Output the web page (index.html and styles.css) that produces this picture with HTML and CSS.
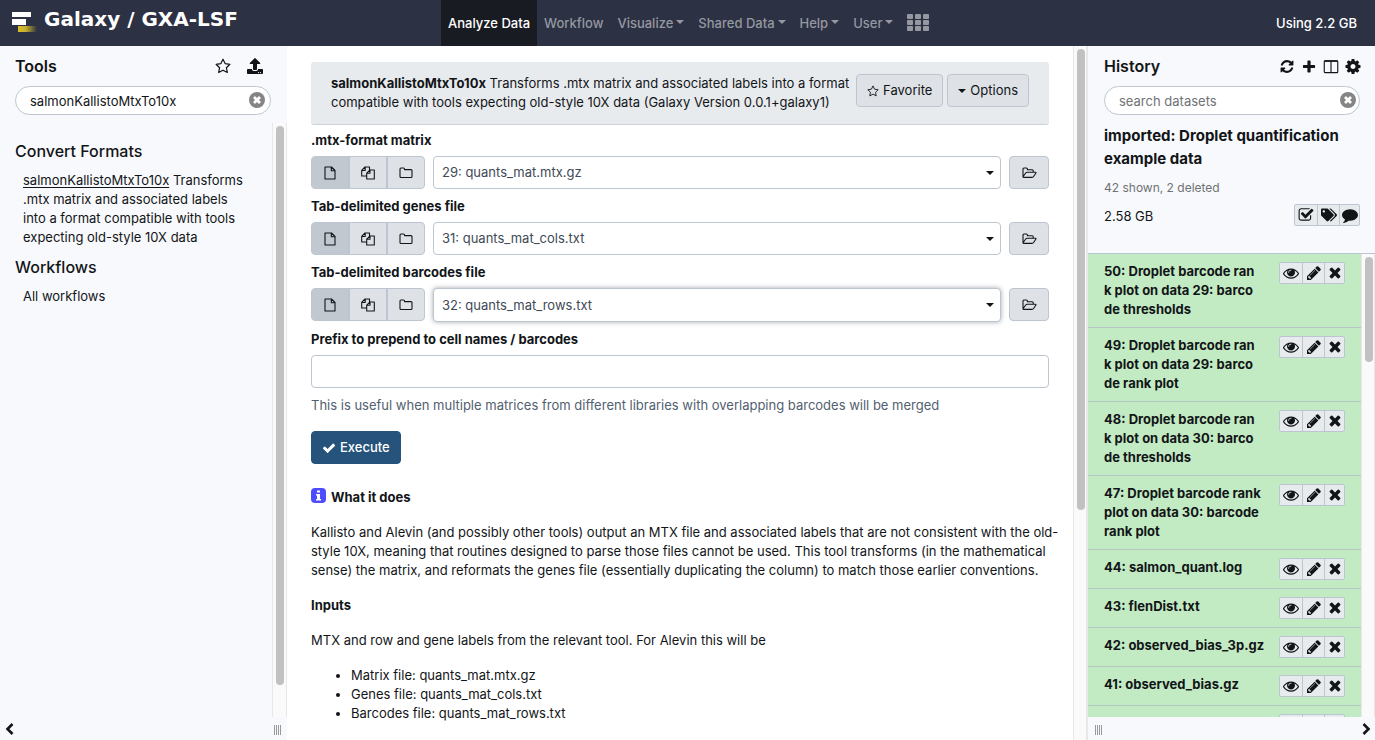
FILE: index.html
```html
<!DOCTYPE html>
<html lang="en">
<head>
<meta charset="utf-8">
<title>Galaxy / GXA-LSF</title>
<link rel="stylesheet" href="styles.css">
</head>
<body>
<svg class="sprite" aria-hidden="true">
  <symbol id="i-star" viewBox="0 0 16 16"><path fill="none" stroke="currentColor" stroke-width="1.200" stroke-linejoin="round" d="M8 1.200l2.100 4.400 4.800.7-3.500 3.400.9 4.800L8 12.200l-4.300 2.300.9-4.800L1.100 6.300l4.800-.7z"/></symbol>
  <symbol id="i-upload" viewBox="0 0 512 512"><path d="M296 384h-80c-13.300 0-24-10.700-24-24V192h-87.700c-17.800 0-26.700-21.500-14.100-34.100L242.300 5.700c7.500-7.500 19.800-7.500 27.300 0l152.200 152.200c12.600 12.600 3.700 34.100-14.100 34.100H320v168c0 13.300-10.700 24-24 24zm216-8v112c0 13.300-10.700 24-24 24H24c-13.300 0-24-10.700-24-24V376c0-13.300 10.700-24 24-24h136v8c0 30.900 25.100 56 56 56h80c30.900 0 56-25.100 56-56v-8h136c13.300 0 24 10.700 24 24zm-124 88c0-11-9-20-20-20s-20 9-20 20 9 20 20 20 20-9 20-20zm64 0c0-11-9-20-20-20s-20 9-20 20 9 20 20 20 20-9 20-20z"/></symbol>
  <symbol id="i-clear" viewBox="0 0 16 16"><circle cx="8" cy="8" r="8"/><path d="M5 5l6 6M11 5l-6 6" stroke="#fff" stroke-width="2.800"/></symbol>
  <symbol id="i-refresh" viewBox="0 0 1536 1792"><path d="M1511 1056q0 5-1 7-64 268-268 434.500t-478 166.500q-146 0-282.500-55t-243.500-157l-129 129q-19 19-45 19t-45-19-19-45v-448q0-26 19-45t45-19h448q26 0 45 19t19 45-19 45l-137 137q71 66 161 102t187 36q134 0 250-65t186-179q11-17 53-117 8-23 30-23h192q13 0 22.500 9.500t9.500 22.500zm25-800v448q0 26-19 45t-45 19h-448q-26 0-45-19t-19-45 19-45l138-138q-148-137-349-137-134 0-250 65t-186 179q-11 17-53 117-8 23-30 23h-199q-13 0-22.500-9.500t-9.500-22.500v-7q65-268 270-434.500t480-166.500q146 0 284 55.500t245 156.500l130-129q19-19 45-19t45 19 19 45z"/></symbol>
  <symbol id="i-plus" viewBox="0 0 16 16"><path d="M6.300 2.300q0-.8.8-.8h1.800q.8 0 .8.800v4h4q.8 0 .8.800v1.800q0 .8-.8.800h-4v4q0 .8-.8.800H7.100q-.8 0-.8-.8v-4h-4q-.8 0-.8-.8V7.100q0-.8.800-.8h4z"/></symbol>
  <symbol id="i-columns" viewBox="0 0 16 16"><path fill="none" stroke="currentColor" stroke-width="1.200" d="M1.800 2h12.400q1 0 1 1v10.500q0 1-1 1H1.800q-1 0-1-1V3q0-1 1-1zM8 2v12.500"/><path d="M.8 1.400h14.400v1.600H.8z"/></symbol>
  <symbol id="i-cog" viewBox="128 128 1536 1536"><path d="M1152 896q0-106-75-181t-181-75-181 75-75 181 75 181 181 75 181-75 75-181zm512-109v222q0 12-8 23t-20 13l-185 28q-19 54-39 91 35 50 107 138 10 12 10 25t-9 23q-27 37-99 108t-94 71q-12 0-26-9l-138-108q-44 23-91 38-16 136-29 186-7 28-36 28h-222q-14 0-24.500-8.500t-11.500-21.500l-28-184q-49-16-90-37l-141 107q-10 9-25 9-14 0-25-11-126-114-165-168-7-10-7-23 0-12 8-23 15-21 51-66.500t54-70.500q-27-50-41-99l-183-27q-13-2-21-12.500t-8-23.500v-222q0-12 8-23t19-13l186-28q14-46 39-92-40-57-107-138-10-12-10-24 0-10 9-23 26-36 98.500-107.500t94.500-71.500q13 0 26 10l138 107q44-23 91-38 16-136 29-186 7-28 36-28h222q14 0 24.500 8.500t11.500 21.500l28 184q49 16 90 37l142-107q9-9 24-9 13 0 25 10 129 119 165 170 7 8 7 22 0 12-8 23-15 21-51 66.500t-54 70.500q26 50 41 98l183 28q13 2 21 12.500t8 23.500z"/></symbol>
  <symbol id="i-check-square" viewBox="0 0 1792 1792"><path d="M1472 930v318q0 119-84.500 203.500t-203.500 84.500h-832q-119 0-203.500-84.500t-84.500-203.500v-832q0-119 84.500-203.500t203.500-84.500h832q63 0 117 25 15 7 18 23 3 17-9 29l-49 49q-10 10-23 10-3 0-9-2-23-6-45-6h-832q-66 0-113 47t-47 113v832q0 66 47 113t113 47h832q66 0 113-47t47-113v-254q0-13 9-22l64-64q10-10 23-10 6 0 12 3 20 8 20 29zm231-489l-814 814q-24 24-57 24t-57-24l-430-430q-24-24-24-57t24-57l110-110q24-24 57-24t57 24l263 263 647-647q24-24 57-24t57 24l110 110q24 24 24 57t-24 57z"/></symbol>
  <symbol id="i-tags" viewBox="0 0 640 512"><path d="M497.900 225.900L286.100 14.100A48 48 0 0 0 252.100 0H48C21.500 0 0 21.500 0 48v204.100a48 48 0 0 0 14.100 33.900l211.900 211.900c18.700 18.700 49.100 18.700 67.900 0l204.100-204.100c18.700-18.700 18.700-49.100 0-67.900zM112 160c-26.500 0-48-21.500-48-48s21.500-48 48-48 48 21.500 48 48-21.500 48-48 48zm513.900 133.800L421.800 497.900c-18.700 18.700-49.100 18.700-67.900 0l-.4-.4L527.600 323.500c17-17 26.400-39.600 26.400-63.600s-9.400-46.600-26.400-63.600L331.400 0h48.700a48 48 0 0 1 33.900 14.100l211.900 211.900c18.700 18.700 18.700 49.100 0 67.800z"/></symbol>
  <symbol id="i-comment" viewBox="0 0 1792 1792"><path d="M1792 896q0 174-120 321.500t-326 233-450 85.500q-70 0-145-8-198 175-460 242-49 14-114 22-17 2-30.500-9t-17.500-29v-1q-3-4-.5-12t2-10 4.500-9.500l6-9 7-8.500 8-9q7-8 31-34.500t34.500-38 31-39.500 32.500-51 27-59 26-76q-157-89-247.500-220t-90.500-281q0-130 71-248.500t191-204.500 286-136.500 348-50.500q244 0 450 85.500t326 233 120 321.500z"/></symbol>
  <symbol id="i-eye" viewBox="0 0 1792 1792"><path d="M1664 960q-152-236-381-353 61 104 61 225 0 185-131.500 316.500t-316.500 131.500-316.500-131.500-131.500-316.500q0-121 61-225-229 117-381 353 133 205 333.500 326.500t434.500 121.500 434.500-121.500 333.500-326.500zm-720-384q0-20-14-34t-34-14q-125 0-214.500 89.500t-89.500 214.500q0 20 14 34t34 14 34-14 14-34q0-86 61-147t147-61q20 0 34-14t14-34zm848 384q0 34-20 69-140 230-376.500 368.500t-499.500 138.500-499.500-139-376.500-368q-20-35-20-69t20-69q140-229 376.500-368t499.500-139 499.500 139 376.500 368q20 35 20 69z"/></symbol>
  <symbol id="i-pencil" viewBox="128 128 1536 1536"><path d="M491 1536l91-91-235-235-91 91v107h128v128h107zm523-928q0-22-22-22-10 0-17 7l-542 542q-7 7-7 17 0 22 22 22 10 0 17-7l542-542q7-7 7-17zm-54-192l416 416-832 832h-416v-416zm683 96q0 53-37 90l-166 166-416-416 166-165q36-38 90-38 53 0 91 38l235 234q37 39 37 91z"/></symbol>
  <symbol id="i-times" viewBox="128 192 1536 1536"><path d="M1490 1322q0 40-28 68l-136 136q-28 28-68 28t-68-28l-294-294-294 294q-28 28-68 28t-68-28l-136-136q-28-28-28-68t28-68l294-294-294-294q-28-28-28-68t28-68l136-136q28-28 68-28t68 28l294 294 294-294q28-28 68-28t68 28l136 136q28 28 28 68t-28 68l-294 294 294 294q28 28 28 68z"/></symbol>
  <symbol id="i-check" viewBox="0 0 1792 1792"><path d="M1671 566q0 40-28 68l-724 724-136 136q-28 28-68 28t-68-28l-136-136-362-362q-28-28-28-68t28-68l136-136q28-28 68-28t68 28l294 295 656-657q28-28 68-28t68 28l136 136q28 28 28 68z"/></symbol>
  <symbol id="i-file" viewBox="0 0 14 14"><path fill="none" stroke="currentColor" stroke-width="1.100" stroke-linejoin="round" d="M2 1h6.500L12 4.500V13H2zM8.300 1v3.700H12"/></symbol>
  <symbol id="i-files" viewBox="0 0 14 14"><path fill="none" stroke="currentColor" stroke-width="1.100" stroke-linejoin="round" d="M5.500 10H.7V4.400L4 1h4.500v3M4.200 1v3.500H.8M9 4h4.300v9H5.700V7.200zM9 4v3.300H5.700"/></symbol>
  <symbol id="i-folder" viewBox="0 0 14 14"><path fill="none" stroke="currentColor" stroke-width="1.100" stroke-linejoin="round" d="M1 3q0-1 1-1h2.500q1 0 1 1v.6H12q1 0 1 1V10.500q0 1-1 1H2q-1 0-1-1z"/></symbol>
  <symbol id="i-folder-open" viewBox="0 0 15 14"><path fill="none" stroke="currentColor" stroke-width="1.100" stroke-linejoin="round" d="M1 10.500V3q0-1 1-1h2.400q1 0 1 1v.7h4.800q1 0 1 1V6.300M1 10.700l2.700-3.700q.5-.7 1.400-.7h8.200q1.200 0 .5 1l-2.200 3.200q-.6.900-1.500.9H1.900q-.9 0-.9-1z"/></symbol>
  <symbol id="i-left" viewBox="0 0 12 14"><path fill="none" stroke="currentColor" stroke-width="2.600" d="M8.500 2L3.500 7l5 5"/></symbol>
  <symbol id="i-right" viewBox="0 0 12 14"><path fill="none" stroke="currentColor" stroke-width="2.600" d="M3.500 2l5 5-5 5"/></symbol>
  <symbol id="i-grip" viewBox="0 0 8 10"><path stroke="#999" stroke-width="1" d="M.5 0v10M2.500 0v10M4.500 0v10M6.500 0v10"/></symbol>
</svg>

<header class="masthead">
  <a class="brand" href="#">
    <svg class="brand-logo" viewBox="0 0 26 22" aria-hidden="true">
      <defs><linearGradient id="gold"><stop offset="0" stop-color="#d9bf26"/><stop offset=".4" stop-color="#c7b02d"/><stop offset="1" stop-color="#2c3143"/></linearGradient></defs>
      <path fill="#fff" d="M0 0h19v5H0zM0 7h14v6H0z"/><path fill="url(#gold)" d="M6 14h19v6H6z"/>
    </svg>
    <span>Galaxy / GXA-LSF</span>
  </a>
  <nav class="nav">
    <a class="active" href="#">Analyze Data</a>
    <a href="#">Workflow</a>
    <a href="#">Visualize<i class="caret"></i></a>
    <a href="#">Shared Data<i class="caret"></i></a>
    <a href="#">Help<i class="caret"></i></a>
    <a href="#">User<i class="caret"></i></a>
    <a href="#" aria-label="Apps"><svg class="apps" viewBox="0 0 22 18"><g fill="currentColor"><rect width="6" height="5" rx="1"/><rect x="8" width="6" height="5" rx="1"/><rect x="16" width="6" height="5" rx="1"/><rect y="6" width="6" height="5" rx="1"/><rect x="8" y="6" width="6" height="5" rx="1"/><rect x="16" y="6" width="6" height="5" rx="1"/><rect y="12" width="6" height="5" rx="1"/><rect x="8" y="12" width="6" height="5" rx="1"/><rect x="16" y="12" width="6" height="5" rx="1"/></g></svg></a>
  </nav>
  <span class="quota">Using 2.2 GB</span>
</header>

<div class="columns">
  <aside class="panel tools">
    <div class="panel-head">
      <h2>Tools</h2>
      <div class="head-icons wide">
        <button aria-label="Favorites"><svg><use href="#i-star"/></svg></button>
        <button aria-label="Upload"><svg><use href="#i-upload"/></svg></button>
      </div>
    </div>
    <div class="search">
      <input type="text" aria-label="search tools" value="salmonKallistoMtxTo10x">
      <button aria-label="Clear"><svg><use href="#i-clear"/></svg></button>
    </div>
    <div class="scroll-area">
      <div class="tool-list">
        <h3>Convert Formats</h3>
        <p><a href="#">salmonKallistoMtxTo10x</a> Transforms .mtx matrix and associated labels into a format compatible with tools expecting old-style 10X data</p>
        <h3>Workflows</h3>
        <p>All workflows</p>
      </div>
      <div class="track"><div class="thumb tools-thumb"></div></div>
    </div>
    <footer class="panel-foot">
      <button aria-label="Collapse tools"><svg class="chevron"><use href="#i-left"/></svg></button>
      <svg class="grip"><use href="#i-grip"/></svg>
    </footer>
  </aside>

  <main class="center">
    <div class="center-body">
      <div class="tool-header">
        <p><b>salmonKallistoMtxTo10x</b> Transforms .mtx matrix and associated labels into a format compatible with tools expecting old-style 10X data (Galaxy Version 0.0.1+galaxy1)</p>
        <div class="tool-actions">
          <button class="btn"><svg><use href="#i-star"/></svg>Favorite</button>
          <button class="btn"><i class="caret"></i>Options</button>
        </div>
      </div>
      <form class="form">
        <div class="field">
          <label for="matrix">.mtx-format matrix</label>
          <div class="row">
            <div class="group">
              <button type="button" class="on" aria-label="Single dataset"><svg><use href="#i-file"/></svg></button>
              <button type="button" aria-label="Multiple datasets"><svg><use href="#i-files"/></svg></button>
              <button type="button" aria-label="Dataset collection"><svg><use href="#i-folder"/></svg></button>
            </div>
            <div class="select"><select id="matrix"><option>29: quants_mat.mtx.gz</option></select><i class="caret"></i></div>
            <button type="button" class="btn browse" aria-label="Browse"><svg><use href="#i-folder-open"/></svg></button>
          </div>
        </div>
        <div class="field">
          <label for="genes">Tab-delimited genes file</label>
          <div class="row">
            <div class="group">
              <button type="button" class="on" aria-label="Single dataset"><svg><use href="#i-file"/></svg></button>
              <button type="button" aria-label="Multiple datasets"><svg><use href="#i-files"/></svg></button>
              <button type="button" aria-label="Dataset collection"><svg><use href="#i-folder"/></svg></button>
            </div>
            <div class="select"><select id="genes"><option>31: quants_mat_cols.txt</option></select><i class="caret"></i></div>
            <button type="button" class="btn browse" aria-label="Browse"><svg><use href="#i-folder-open"/></svg></button>
          </div>
        </div>
        <div class="field">
          <label for="barcodes">Tab-delimited barcodes file</label>
          <div class="row">
            <div class="group">
              <button type="button" class="on" aria-label="Single dataset"><svg><use href="#i-file"/></svg></button>
              <button type="button" aria-label="Multiple datasets"><svg><use href="#i-files"/></svg></button>
              <button type="button" aria-label="Dataset collection"><svg><use href="#i-folder"/></svg></button>
            </div>
            <div class="select focused"><select id="barcodes"><option>32: quants_mat_rows.txt</option></select><i class="caret"></i></div>
            <button type="button" class="btn browse" aria-label="Browse"><svg><use href="#i-folder-open"/></svg></button>
          </div>
        </div>
        <div class="field">
          <label for="prefix">Prefix to prepend to cell names / barcodes</label>
          <input class="text" id="prefix" type="text">
          <p class="help">This is useful when multiple matrices from different libraries with overlapping barcodes will be merged</p>
        </div>
        <button type="button" class="btn primary"><svg><use href="#i-check"/></svg>Execute</button>
      </form>
      <section class="docs">
        <p><b class="what"><span class="info" aria-hidden="true"><svg viewBox="0 0 15 15"><rect width="15" height="15" rx="4" fill="#4d4dff"/><path fill="#fff" d="M6 2.500h3v2H6zM5 6h4v5h1v1.500H5V11h1V7.500H5z"/></svg></span>What it does</b></p>
        <p class="lines">Kallisto and Alevin (and possibly other tools) output an MTX file and associated labels that are not consistent with the old-<br>style 10X, meaning that routines designed to parse those files cannot be used. This tool transforms (in the mathematical<br>sense) the matrix, and reformats the genes file (essentially duplicating the column) to match those earlier conventions.</p>
        <p><b>Inputs</b></p>
        <p>MTX and row and gene labels from the relevant tool. For Alevin this will be</p>
        <ul>
          <li>Matrix file: quants_mat.mtx.gz</li>
          <li>Genes file: quants_mat_cols.txt</li>
          <li>Barcodes file: quants_mat_rows.txt</li>
        </ul>
      </section>
    </div>
    <div class="track"><div class="thumb center-thumb"></div></div>
  </main>

  <aside class="panel history">
    <div class="panel-head">
      <h2>History</h2>
      <div class="head-icons">
        <button aria-label="Refresh"><svg><use href="#i-refresh"/></svg></button>
        <button aria-label="New history"><svg><use href="#i-plus"/></svg></button>
        <button aria-label="View all histories"><svg><use href="#i-columns"/></svg></button>
        <button aria-label="Options"><svg><use href="#i-cog"/></svg></button>
      </div>
    </div>
    <div class="search">
      <input type="text" aria-label="search datasets" placeholder="search datasets">
      <button aria-label="Clear"><svg><use href="#i-clear"/></svg></button>
    </div>
    <div class="summary">
      <h3>imported: Droplet quantification example data</h3>
      <p class="counts">42 shown, 2 deleted</p>
      <div class="size">
        <span>2.58 GB</span>
        <div class="actions large">
          <button aria-label="Select"><svg><use href="#i-check-square"/></svg></button>
          <button aria-label="Tags"><svg><use href="#i-tags"/></svg></button>
          <button aria-label="Annotate"><svg><use href="#i-comment"/></svg></button>
        </div>
      </div>
    </div>
    <div class="scroll-area datasets-area">
      <div class="datasets">
        <div class="dataset"><a href="#">50: Droplet barcode ran<br>k plot on data 29: barco<br>de thresholds</a><div class="actions"><button aria-label="View"><svg><use href="#i-eye"/></svg></button><button aria-label="Edit"><svg><use href="#i-pencil"/></svg></button><button aria-label="Delete"><svg><use href="#i-times"/></svg></button></div></div>
        <div class="dataset"><a href="#">49: Droplet barcode ran<br>k plot on data 29: barco<br>de rank plot</a><div class="actions"><button aria-label="View"><svg><use href="#i-eye"/></svg></button><button aria-label="Edit"><svg><use href="#i-pencil"/></svg></button><button aria-label="Delete"><svg><use href="#i-times"/></svg></button></div></div>
        <div class="dataset"><a href="#">48: Droplet barcode ran<br>k plot on data 30: barco<br>de thresholds</a><div class="actions"><button aria-label="View"><svg><use href="#i-eye"/></svg></button><button aria-label="Edit"><svg><use href="#i-pencil"/></svg></button><button aria-label="Delete"><svg><use href="#i-times"/></svg></button></div></div>
        <div class="dataset"><a href="#">47: Droplet barcode rank<br>plot on data 30: barcode<br>rank plot</a><div class="actions"><button aria-label="View"><svg><use href="#i-eye"/></svg></button><button aria-label="Edit"><svg><use href="#i-pencil"/></svg></button><button aria-label="Delete"><svg><use href="#i-times"/></svg></button></div></div>
        <div class="dataset"><a href="#">44: salmon_quant.log</a><div class="actions"><button aria-label="View"><svg><use href="#i-eye"/></svg></button><button aria-label="Edit"><svg><use href="#i-pencil"/></svg></button><button aria-label="Delete"><svg><use href="#i-times"/></svg></button></div></div>
        <div class="dataset"><a href="#">43: flenDist.txt</a><div class="actions"><button aria-label="View"><svg><use href="#i-eye"/></svg></button><button aria-label="Edit"><svg><use href="#i-pencil"/></svg></button><button aria-label="Delete"><svg><use href="#i-times"/></svg></button></div></div>
        <div class="dataset"><a href="#">42: observed_bias_3p.gz</a><div class="actions"><button aria-label="View"><svg><use href="#i-eye"/></svg></button><button aria-label="Edit"><svg><use href="#i-pencil"/></svg></button><button aria-label="Delete"><svg><use href="#i-times"/></svg></button></div></div>
        <div class="dataset"><a href="#">41: observed_bias.gz</a><div class="actions"><button aria-label="View"><svg><use href="#i-eye"/></svg></button><button aria-label="Edit"><svg><use href="#i-pencil"/></svg></button><button aria-label="Delete"><svg><use href="#i-times"/></svg></button></div></div>
        <div class="dataset"><div class="actions"><button aria-label="View"></button><button aria-label="Edit"></button><button aria-label="Delete"></button></div></div>
      </div>
      <div class="track"><div class="thumb history-thumb"></div></div>
    </div>
    <footer class="panel-foot">
      <svg class="grip"><use href="#i-grip"/></svg>
      <button aria-label="Collapse history"><svg class="chevron"><use href="#i-right"/></svg></button>
    </footer>
  </aside>
</div>
</body>
</html>
```

FILE: styles.css
```css
*, *::before, *::after { box-sizing: border-box; }

body {
  margin: 0;
  height: 100vh;
  display: flex;
  flex-direction: column;
  overflow: hidden;
  font: 13px/19px Inter, "Noto Sans", sans-serif;
  color: #121518;
  background: #fff;
}

h2, h3, p, ul { margin: 0; }
b, label { font-weight: 700; }
button, input, select { font: inherit; color: inherit; margin: 0; }
button { padding: 0; border: 0; background: none; }
a { color: inherit; text-decoration: none; }
svg { display: block; fill: currentColor; }
.sprite { position: absolute; width: 0; height: 0; }

.caret {
  display: inline-block;
  border: 4px solid transparent;
  border-top-color: currentColor;
  border-bottom: 0;
}

/* Masthead */
.masthead {
  flex: none;
  height: 46px;
  display: grid;
  grid-template-columns: 441px 1fr auto;
  background: #2c3143;
  color: #fff;
}
.brand {
  display: flex;
  align-items: flex-start;
  gap: 6px;
  padding: 7px 0 0 12px;
  font: bold 20px/24px "DejaVu Sans", Verdana, sans-serif;
}
.brand-logo { width: 26px; height: 22px; margin-top: 5px; }
.nav { display: flex; font-weight: 500; }
.nav a {
  display: flex;
  align-items: center;
  gap: 3px;
  padding: 0 7px;
  color: #9598a1;
}
.nav .caret { margin-bottom: 3px; }
.nav .active { color: #fff; background: #191b22; }
.apps { width: 22px; height: 18px; }
.quota { align-self: center; padding-right: 18px; font-weight: 500; }

/* Panels */
.columns {
  flex: 1;
  min-height: 0;
  display: grid;
  grid-template-columns: 287px 1fr 288px;
}
.panel {
  display: flex;
  flex-direction: column;
  min-height: 0;
  background: #f8f9fc;
}
.history { border-left: 1px solid #e8e8e8; }
.panel-head {
  display: flex;
  justify-content: space-between;
  align-items: center;
  padding: 8px 15px 0;
  height: 32px;
}
.panel-head h2 { font-size: 16px; line-height: 24px; font-weight: 600; }
.history .panel-head { padding: 8px 14px 0 16px; }
.head-icons { display: flex; gap: 6px; }
.head-icons svg { width: 16px; height: 16px; }
.history .head-icons svg { width: 16px; height: 15px; }
.wide { gap: 16px; padding-right: 9px; }

.search { position: relative; margin: 8px 15px 0 16px; }
.tools .search { margin: 8px 16px 0 15px; }
.search input {
  display: block;
  width: 100%;
  height: 29px;
  padding: 0 32px 0 14px;
  border: 1px solid #bdc6d0;
  border-radius: 15px;
  background: #fff;
  outline: 0;
}
.search input::placeholder { color: #6f7275; opacity: 1; }
.search button { position: absolute; right: 4px; top: 6px; color: #858585; }
.tools .search button { right: 6px; }
.search svg { width: 16px; height: 16px; }

.scroll-area { flex: 1; min-height: 0; display: flex; overflow: hidden; }
.track {
  flex: none;
  width: 14px;
  padding: 3px;
  border-left: 1px solid #e8e8e8;
  border-right: 1px solid #e8e8e8;
  background: #fafafa;
}
.thumb { width: 8px; border-radius: 4px; background: #c1c1c1; }
.tools .scroll-area { margin-top: 8px; }
.tools .track { width: 15px; }
.tools-thumb { height: 95%; }
.center-thumb { height: 67%; }
.history-thumb { height: 23%; }
.panel-foot {
  flex: none;
  height: 23px;
  display: flex;
  justify-content: space-between;
  align-items: center;
  padding: 0 5px 0 4px;
}
.history .panel-foot { padding: 0 3px 0 7px; }
.chevron { width: 12px; height: 14px; }
.grip { width: 8px; height: 10px; margin-top: 3px; }

.tool-list { flex: 1; padding: 16px 20px 0 15px; }
.tool-list h3 { font-size: 16px; line-height: 24px; font-weight: 500; }
.tool-list p { padding: 8px; }
.tool-list p a { text-decoration: underline; text-underline-offset: 2px; }

/* Centre */
.center { display: flex; min-width: 0; min-height: 0; overflow: hidden; }
.center-body { flex: 1; min-width: 0; padding: 16px 24px 0; }
.tool-header {
  display: flex;
  justify-content: space-between;
  align-items: flex-start;
  gap: 4px;
  padding: 12px 20px;
  border-bottom: 1px solid #ccd2d8;
  border-radius: 3px;
  background: #e8ebee;
}
.tool-actions { flex: none; display: flex; gap: 4px; }
.btn {
  display: inline-flex;
  align-items: center;
  justify-content: center;
  gap: 4px;
  height: 33px;
  padding: 0 10px;
  border: 1px solid #bdc6d0;
  border-radius: 4px;
  background: #dee2e6;
}
.btn svg { width: 12px; height: 12px; }
.field { padding-top: 6px; }
.field + .field { padding-top: 8px; }
.field label { display: block; margin-bottom: 6px; }
.row { display: flex; gap: 8px; }
.group {
  flex: none;
  display: grid;
  grid-template-columns: 36px 38px 38px;
  height: 33px;
  border: 1px solid #bdc6d0;
  border-radius: 4px;
  background: #dee2e6;
  overflow: hidden;
}
.group button { display: flex; align-items: center; justify-content: center; }
.group button + button { border-left: 2px solid #bdc6d0; }
.group .on { background: #c1c8d0; }
.group svg { width: 14px; height: 14px; }
.select { position: relative; flex: 1; }
.select select {
  display: block;
  appearance: none;
  width: 100%;
  height: 33px;
  padding: 0 24px 0 8px;
  border: 1px solid #bdc6d0;
  border-radius: 4px;
  background: #fff;
  color: #3f4a56;
  outline: 0;
}
.select .caret { position: absolute; right: 7px; top: 15px; }
.focused select { height: 34px; box-shadow: 0 0 5px #a3a9af; }
.browse { width: 40px; padding: 0; }
.browse svg { width: 15px; height: 14px; }
.text {
  display: block;
  width: 100%;
  height: 33px;
  padding: 0 8px;
  border: 1px solid #bdc6d0;
  border-radius: 4px;
  background: #fff;
}
.help { padding: 8px 0 16px; color: #526070; }
.primary { border-color: #25537b; background: #25537b; color: #fff; font-weight: 500; }
.primary svg { width: 14px; height: 14px; }
.docs { padding-top: 24px; }
.docs p { margin-bottom: 16px; }
.docs .lines { white-space: nowrap; }
.what { display: flex; gap: 5px; }
.info svg { width: 15px; height: 15px; }
.docs ul { padding-left: 40px; }

/* History */
.summary { padding: 9px 15px 27px 16px; border-bottom: 1px solid #bdc6d0; }
.summary h3 { font-size: 15px; line-height: 23px; font-weight: 700; }
.counts { padding-top: 8px; font-size: 12px; color: #6f7275; }
.size { display: flex; justify-content: space-between; align-items: flex-end; padding-top: 7px; }
.actions {
  flex: none;
  display: flex;
  height: 22px;
  border: 1px solid #bdc6d0;
  border-radius: 2px;
  background: #e8ebee;
}
.actions button { width: 22px; display: flex; align-items: center; justify-content: center; }
.actions button + button { border-left: 1px solid #bdc6d0; }
.actions button:last-child { width: 20px; }
.actions svg { width: 14px; height: 14px; }
.actions button:first-child svg { width: 16px; height: 16px; }
.large svg { width: 16px; height: 16px; }
.datasets { flex: 1; min-width: 0; }
.dataset {
  display: flex;
  justify-content: space-between;
  align-items: flex-start;
  gap: 8px;
  padding: 8px 16px;
  border-bottom: 1px solid #b7c6c4;
  background: #c3ebc3;
}
.dataset a { font-weight: 700; word-break: break-all; }
.dataset .actions { margin-left: auto; }
```
